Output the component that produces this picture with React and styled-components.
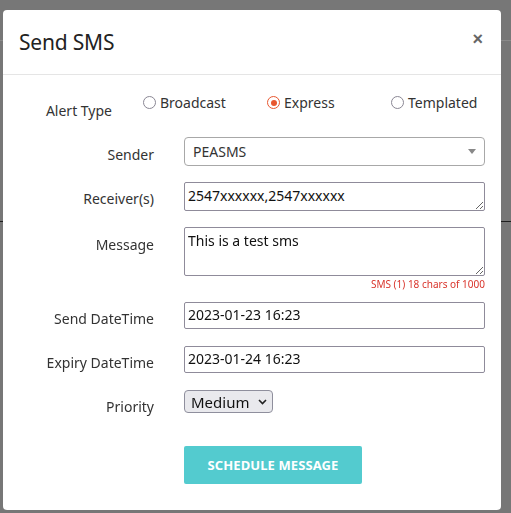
import React, { useState } from 'react';
import styled, { createGlobalStyle } from 'styled-components';

const GlobalStyle = createGlobalStyle`
  html, body {
    margin: 0;
    padding: 0;
    background: #777777;
    font-family: "Noto Sans", "Open Sans", sans-serif;
  }
`;

const PageBehind = styled.div`
  height: 513px;
  display: flex;
  flex-direction: column;
`;

const BehindBar = styled.div`
  height: ${p => p.h}px;
  border-bottom: 1px solid ${p => p.line};
`;

const Backdrop = styled.div`
  position: fixed;
  inset: 0;
  padding: 10px 10px 0 3px;
`;

const ModalBox = styled.div`
  background: #fff;
  width: 498px;
  height: 500px;
  border-radius: 4px;
  display: flex;
  flex-direction: column;
`;

const ModalTop = styled.div`
  height: 64px;
  border-bottom: 1px solid #e5e5e5;
  display: flex;
  justify-content: space-between;
  align-items: center;
  padding: 0 18px 0 16px;
`;

const ModalTitle = styled.h4`
  margin: 0;
  font-family: "Noto Sans", sans-serif;
  font-weight: 400;
  font-size: 21px;
  color: #222;
  letter-spacing: -0.2px;
`;

const CloseButton = styled.button`
  background: none;
  border: none;
  padding: 0;
  margin-top: -6px;
  color: #666;
  font-size: 18px;
  font-weight: 700;
  line-height: 1;
  cursor: pointer;
`;

const ModalBody = styled.div`
  padding: 18px 16px 0 0;
  display: flex;
  flex-direction: column;
`;

const Row = styled.div`
  display: grid;
  grid-template-columns: 151px 301px;
  column-gap: 30px;
  align-items: start;
  margin-bottom: ${p => p.gap}px;
`;

const Label = styled.label`
  text-align: right;
  font-size: 14px;
  color: #333;
  padding-top: ${p => p.top || 8}px;
  padding-right: ${p => p.right || 0}px;
`;

const RadioGroup = styled.div`
  display: grid;
  grid-template-columns: repeat(3, 124px);
  margin-left: -41px;
`;

const RadioOption = styled.label`
  display: flex;
  align-items: center;
  gap: 4px;
  font-size: 14px;
  color: #333;
  cursor: pointer;
`;

const RadioCircle = styled.span`
  width: 11px;
  height: 11px;
  border-radius: 50%;
  border: 1.5px solid ${p => (p.checked ? '#e8572f' : '#8a8794')};
  display: flex;
  align-items: center;
  justify-content: center;
  &::after {
    content: '';
    width: 6px;
    height: 6px;
    border-radius: 50%;
    background: ${p => (p.checked ? '#e8572f' : 'transparent')};
  }
`;

const SelectBox = styled.div`
  height: 27px;
  border: 1px solid #a8a8a8;
  border-radius: 4px;
  display: flex;
  align-items: center;
  justify-content: space-between;
  padding: 0 8px;
  font-size: 14px;
  color: #333;
`;

const Caret = styled.span`
  width: 0;
  height: 0;
  border-left: 4px solid transparent;
  border-right: 4px solid transparent;
  border-top: 5px solid #888;
`;

const TextArea = styled.textarea`
  box-sizing: border-box;
  width: 301px;
  height: ${p => p.h}px;
  border: 1px solid #8f8b9a;
  border-radius: 2px;
  padding: 3px 3px;
  font-family: "Noto Sans", sans-serif;
  font-size: 14px;
  color: #111;
  resize: vertical;
  display: block;
  outline: none;
`;

const Counter = styled.div`
  text-align: right;
  font-size: 10px;
  color: #d9342b;
  margin-top: 1px;
`;

const TextInput = styled.input`
  box-sizing: border-box;
  width: 301px;
  height: 27px;
  border: 1px solid #8f8b9a;
  border-radius: 2px;
  padding: 0 3px 2px;
  font-family: "Noto Sans", sans-serif;
  font-size: 14px;
  color: #111;
  outline: none;
`;

const PrioritySelect = styled.div`
  width: 89px;
  height: 23px;
  box-sizing: border-box;
  background: #e9e9ed;
  border: 1px solid #8f8f9d;
  border-radius: 4px;
  display: flex;
  align-items: center;
  justify-content: space-between;
  padding: 0 5px 0 6px;
  font-size: 15px;
  color: #111;
`;

const Button = styled.button`
  width: 178px;
  height: 38px;
  background: #53cbcf;
  border: none;
  border-radius: 2px;
  color: #fff;
  font-family: "Noto Sans", sans-serif;
  font-weight: 700;
  font-size: 13px;
  letter-spacing: 0.1px;
  cursor: pointer;
`;

const Chevron = () => (
  <svg width="9" height="6" viewBox="0 0 9 6">
    <path d="M1 1l3.5 3.5L8 1" fill="none" stroke="#222" strokeWidth="1.6" />
  </svg>
);

const SendSmsModal = () => {
  const [alertType, setAlertType] = useState('express');
  const types = [
    ['broadcast', 'Broadcast'],
    ['express', 'Express'],
    ['templated', 'Templated'],
  ];

  return (
    <ModalBox>
      <ModalTop>
        <ModalTitle>Send SMS</ModalTitle>
        <CloseButton>×</CloseButton>
      </ModalTop>
      <ModalBody>
        <Row gap={17}>
          <Label top={8} right={42}>Alert Type</Label>
          <RadioGroup>
            {types.map(([key, text]) => (
              <RadioOption key={key} onClick={() => setAlertType(key)}>
                <RadioCircle checked={alertType === key} />
                {text}
              </RadioOption>
            ))}
          </RadioGroup>
        </Row>
        <Row gap={16}>
          <Label top={8}>Sender</Label>
          <SelectBox>
            PEASMS
            <Caret />
          </SelectBox>
        </Row>
        <Row gap={16}>
          <Label top={7}>Receiver(s)</Label>
          <TextArea h={29} defaultValue="2547xxxxxx,2547xxxxxx" />
        </Row>
        <Row gap={11}>
          <Label top={8}>Message</Label>
          <div>
            <TextArea h={49} defaultValue="This is a test sms" />
            <Counter>SMS (1) 18 chars of 1000</Counter>
          </div>
        </Row>
        <Row gap={17}>
          <Label top={7}>Send DateTime</Label>
          <TextInput defaultValue="2023-01-23 16:23" />
        </Row>
        <Row gap={17}>
          <Label top={7}>Expiry DateTime</Label>
          <TextInput defaultValue="2023-01-24 16:23" />
        </Row>
        <Row gap={30}>
          <Label top={7}>Priority</Label>
          <PrioritySelect>
            Medium
            <Chevron />
          </PrioritySelect>
        </Row>
        <Row gap={0}>
          <span />
          <Button>SCHEDULE MESSAGE</Button>
        </Row>
      </ModalBody>
    </ModalBox>
  );
};

export default function App() {
  return (
    <>
      <GlobalStyle />
      <PageBehind>
        <BehindBar h={40} line="#8a8a8a" />
        <BehindBar h={180} line="#1e1e1e" />
      </PageBehind>
      <Backdrop>
        <SendSmsModal />
      </Backdrop>
    </>
  );
}
